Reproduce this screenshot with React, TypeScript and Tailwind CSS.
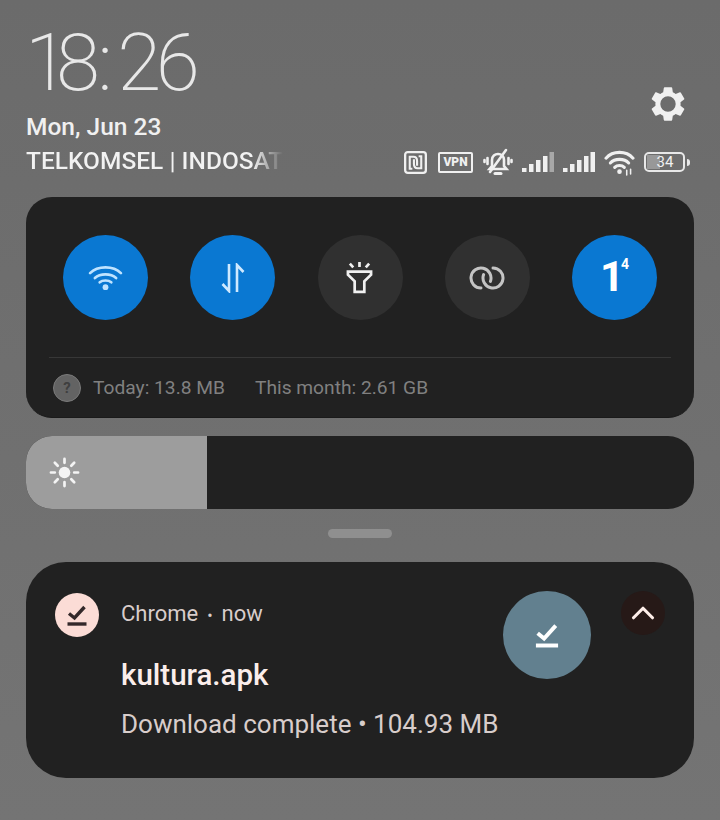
import { ChevronUp } from "lucide-react";

const font = { fontFamily: "Roboto, sans-serif" };

function DoneIcon({ className }: { className?: string }) {
  return (
    <svg viewBox="0 0 24 24" className={className} fill="none" stroke="currentColor">
      <path d="M4 10.5 L9.5 15 L19.5 4" strokeWidth="3.4" />
      <path d="M2.5 21 H21.5" strokeWidth="3.4" />
    </svg>
  );
}

function Bars({ dim }: { dim?: boolean }) {
  return (
    <svg viewBox="0 0 32 22" className="w-[32px] h-[22px]" fill="#f0f0f0">
      <rect x="0" y="17" width="4.5" height="4" />
      <rect x="7" y="13" width="4.5" height="8" />
      <rect x="14" y="9" width="4.5" height="12" />
      <rect x="21" y="5" width="4.5" height="16" />
      <rect x="27.5" y="1" width="4.5" height="20" fill={dim ? "#a8a8a8" : "#f0f0f0"} />
    </svg>
  );
}

function StatusIcons() {
  return (
    <div className="flex items-center gap-[9px] h-[24px] text-[#f0f0f0]">
      <svg viewBox="0 0 22 22" className="w-[23px] h-[23px]" fill="none" stroke="currentColor" strokeWidth="2.2">
        <rect x="1.1" y="1.1" width="19.8" height="19.8" rx="2.5" />
        <path d="M8 17 H5.5 V5.5 H9 C11 5.5 12.5 7 12.5 9.5 V14" strokeWidth="2" />
        <path d="M14 5 H16.5 V16.5 H13 C11 16.5 9.5 15 9.5 12.5 V8" strokeWidth="2" />
      </svg>
      <div className="ml-[2px] w-[35px] h-[21px] border-2 border-[#f0f0f0] rounded-[2px] flex items-center justify-center text-[12px] font-black leading-none">
        VPN
      </div>
      <svg viewBox="0 0 30 28" className="ml-[1px] w-[30px] h-[28px]" fill="none" stroke="currentColor" strokeWidth="2.6" strokeLinecap="round">
        <path d="M9 18 V12 C9 8 12 6 15 6 C18 6 21 8 21 12 V18 L23.5 21 H6.5 Z" />
        <path d="M12 25.5 H18" strokeWidth="3" />
        <path d="M7 24 L23 2" />
        <path d="M4.5 10 V16 M1.5 12 V14 M25.5 10 V16 M28.5 12 V14" />
      </svg>
      <Bars dim />
      <Bars />
      <svg viewBox="0 0 32 28" className="w-[31px] h-[27px]" fill="none" stroke="currentColor" strokeWidth="3.2" strokeLinecap="round">
        <path d="M2 9.5 C9 1.5 23 1.5 30 9.5" />
        <path d="M6.5 14.5 C11 9.5 21 9.5 25.5 14.5" />
        <path d="M11 19 C13.5 16.5 18.5 16.5 21 19" />
        <circle cx="16" cy="23.5" r="2.4" fill="currentColor" stroke="none" />
        <path d="M23.5 22 V27 M27.5 21 V26" strokeWidth="1.6" />
      </svg>
      <div className="flex items-center gap-[2px]">
        <div className="w-[41px] h-[20px] border-2 border-[#e8e8e8] rounded-[5px] p-[1px] flex">
          <div className="w-[13px] h-full bg-[#989898]" />
          <div className="flex-1 flex items-center justify-center -ml-[12px] text-[15px] leading-none">34</div>
        </div>
        <div className="w-[3px] h-[7px] rounded-r-full bg-[#e8e8e8]" />
      </div>
    </div>
  );
}

function Toggle({ on, children }: { on?: boolean; children: React.ReactNode }) {
  return (
    <div className={`w-[85px] h-[85px] rounded-full flex items-center justify-center ${on ? "bg-[#0a78d2]" : "bg-[#303030]"}`}>
      {children}
    </div>
  );
}

export default function App() {
  return (
    <div className="w-[720px] h-[820px] overflow-hidden bg-gradient-to-b from-[#6b6b6b] to-[#747474] px-[26px] text-white" style={font}>
      <div className="h-[197px] relative">
        <div className="pt-[17px] -ml-[1px] text-[80px] leading-[92px] font-extralight text-[#e8e8e8] tracking-[-5.5px]">
          <span className="tracking-[-13px]">1</span>8<span className="ml-[3px] mr-[10px]">:</span>26
        </div>
        <div className="mt-[2px] text-[24.5px] leading-[32px] text-[#f0f0f0] font-medium">Mon, Jun 23</div>
        <div className="w-[257px] overflow-hidden whitespace-nowrap text-[24.5px] leading-[36px] font-medium bg-gradient-to-r from-[#f2f2f2] from-[88%] to-transparent bg-clip-text [-webkit-text-fill-color:transparent]">
          TELKOMSEL | INDOSAT
        </div>
        <svg viewBox="0 0 24 24" className="absolute left-[621px] top-[83px] w-[42px] h-[42px] text-[#f0f0f0]" fill="currentColor" fillRule="evenodd">
          <path d="M19.14 12.94c.04-.3.06-.61.06-.94 0-.32-.02-.64-.07-.94l2.03-1.58a.49.49 0 0 0 .12-.61l-1.92-3.32a.488.488 0 0 0-.59-.22l-2.39.96c-.5-.38-1.03-.7-1.62-.94l-.36-2.54a.484.484 0 0 0-.48-.41h-3.84c-.24 0-.43.17-.47.41l-.36 2.54c-.59.24-1.13.57-1.62.94l-2.39-.96c-.22-.08-.47 0-.59.22L2.74 8.87c-.12.21-.08.47.12.61l2.03 1.58c-.05.3-.09.63-.09.94s.02.64.07.94l-2.03 1.58a.49.49 0 0 0-.12.61l1.92 3.32c.12.22.37.29.59.22l2.39-.96c.5.38 1.03.7 1.62.94l.36 2.54c.05.24.24.41.48.41h3.84c.24 0 .44-.17.47-.41l.36-2.54c.59-.24 1.13-.56 1.62-.94l2.39.96c.22.08.47 0 .59-.22l1.92-3.32c.12-.22.07-.47-.12-.61l-2.01-1.58zM12 16.4a4.4 4.4 0 1 1 0-8.8 4.4 4.4 0 0 1 0 8.8z" />
        </svg>
        <div className="absolute right-[4px] top-[150px]">
          <StatusIcons />
        </div>
      </div>

      <div className="h-[221px] rounded-[26px] bg-[#212121] border-b border-[#1a1a1a] px-[23px]">
        <div className="pt-[38px] pl-[14px] pr-[14px] flex justify-between">
          <Toggle on>
            <svg viewBox="0 0 36 28" className="w-[35px] h-[27px] text-[#bfe3ff]" fill="none" stroke="currentColor" strokeWidth="2.8" strokeLinecap="round">
              <path d="M2 9.5 C10 1.5 26 1.5 34 9.5" />
              <path d="M7 14.5 C12.5 9.5 23.5 9.5 29 14.5" />
              <path d="M12 19 C15 16.5 21 16.5 24 19" />
              <circle cx="18" cy="24" r="3" fill="currentColor" stroke="none" />
            </svg>
          </Toggle>
          <Toggle on>
            <svg viewBox="0 0 24 30" className="w-[24px] h-[30px] text-[#cfe9ff]" fill="none" stroke="currentColor" strokeWidth="2.6">
              <path d="M8 1 V28 L1.5 21" />
              <path d="M16 29 V2 L22.5 9" />
            </svg>
          </Toggle>
          <Toggle>
            <svg viewBox="0 0 28 34" className="-ml-[2px] w-[27px] h-[33px] text-[#f0f0f0]" fill="none" stroke="currentColor" strokeWidth="2.8">
              <path d="M2 11 H26 V14 L19 21 V32 H9 V21 L2 14 Z" />
              <path d="M14 1 V6 M4 2.5 L7.5 6.5 M24 2.5 L20.5 6.5" />
            </svg>
          </Toggle>
          <Toggle>
            <svg viewBox="1 1 36 24" className="w-[36px] h-[24px] text-[#c4c4c4]" fill="none" stroke="currentColor" strokeWidth="3" strokeLinecap="round">
              <path d="M13 23 A10 10 0 1 1 22.4 16.4" />
              <path d="M25 3 A10 10 0 1 1 15.6 9.6" />
            </svg>
          </Toggle>
          <Toggle on>
            <div className="flex items-start text-white font-bold leading-none -mt-[2px]">
              <span className="text-[42px] tracking-[-3px]">1</span>
              <span className="text-[14px] mt-[1px]">4</span>
            </div>
          </Toggle>
        </div>
        <div className="mt-[37px] h-px bg-[#373737]" />
        <div className="mt-[15px] pl-[4px] flex items-center text-[19.2px] leading-[30px] text-[#808080]">
          <div className="w-[28px] h-[28px] rounded-full bg-[#636363] border border-[#7a7a7a] flex items-center justify-center text-[15px] font-bold text-[#3f3f3f]">?</div>
          <span className="ml-[12px]">Today: 13.8 MB</span>
          <span className="ml-[30px]">This month: 2.61 GB</span>
        </div>
      </div>

      <div className="mt-[18px] h-[73px] rounded-[26px] overflow-hidden bg-[#212121] flex">
        <div className="w-[181px] bg-[#9d9d9d] flex items-center pl-[23px]">
          <svg viewBox="0 0 32 32" className="w-[31px] h-[31px] text-[#f4f4f4]" fill="none" stroke="currentColor" strokeWidth="2.8" strokeLinecap="round">
            <circle cx="16" cy="16" r="6" fill="currentColor" stroke="none" />
            <path d="M16 2 V6 M16 26 V30 M2 16 H6 M26 16 H30 M6 6 L9 9 M23 23 L26 26 M26 6 L23 9 M9 23 L6 26" />
          </svg>
        </div>
      </div>

      <div className="mt-[20px] mx-auto w-[64px] h-[9px] rounded-full bg-[#8f8f8f]" />

      <div className="relative mt-[24px] h-[216px] rounded-[40px] bg-[#212121] pl-[29px] pt-[30px]">
        <div className="flex items-center">
          <div className="w-[44px] h-[44px] rounded-full bg-[#fbdcd6] flex items-center justify-center text-[#33282a]">
            <DoneIcon className="w-[24px] h-[24px]" />
          </div>
          <div className="ml-[22px] text-[22px] leading-[44px] text-[#d8cdcb] whitespace-pre">Chrome<span className="mx-[9px] text-[16px]">•</span>now</div>
        </div>
        <div className="mt-[20px] ml-[66px] text-[29.5px] leading-[34px] font-medium text-[#fbeeeb]">kultura.apk</div>
        <div className="mt-[15px] ml-[66px] text-[26px] leading-[34px] text-[#d8cdcb]">Download complete • 104.93 MB</div>
        <div className="absolute left-[477px] top-[29px] w-[88px] h-[88px] rounded-full bg-[#62808f] flex items-center justify-center text-white">
          <DoneIcon className="w-[28px] h-[28px]" />
        </div>
        <div className="absolute left-[595px] top-[29px] w-[44px] h-[44px] rounded-full bg-[#261917] flex items-center justify-center text-[#fdeee9]">
          <ChevronUp size={38} strokeWidth={2} />
        </div>
      </div>
    </div>
  );
}
